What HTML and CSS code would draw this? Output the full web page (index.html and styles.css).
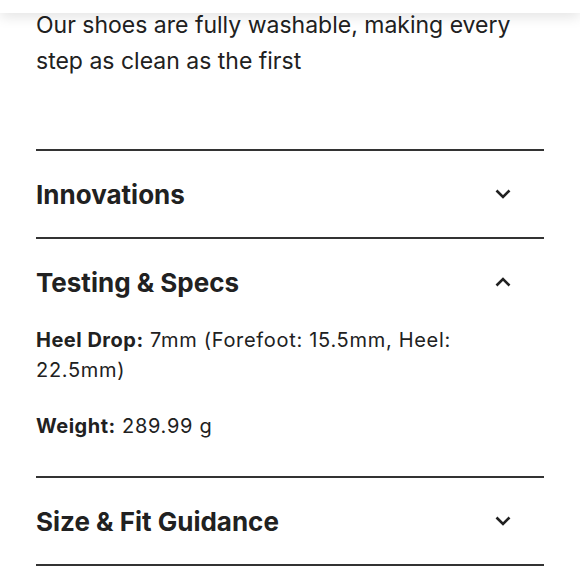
FILE: index.html
```html
<!DOCTYPE html>
<html>
    <head>
        <title>Product details</title>
        <link rel="stylesheet" href="styles.css">
    </head>
    <body>
        <div class="topbar"></div>
        <p class="intro">Our shoes are fully washable, making every step as clean as the first</p>
        <section class="accordion">
            <div class="item">
                <div class="item-head">
                    <h2>Innovations</h2>
                    <svg class="chevron" width="16" height="10" viewBox="0 0 16 10"><path d="M1.5 1.5 L8 8 L14.5 1.5" /></svg>
                </div>
            </div>
            <div class="item open">
                <div class="item-head">
                    <h2>Testing &amp; Specs</h2>
                    <svg class="chevron" width="16" height="10" viewBox="0 0 16 10"><path d="M1.5 8.5 L8 2 L14.5 8.5" /></svg>
                </div>
                <div class="item-body">
                    <p><b>Heel Drop:</b> 7mm (Forefoot: 15.5mm, Heel: 22.5mm)</p>
                    <p><b>Weight:</b> 289.99 g</p>
                </div>
            </div>
            <div class="item">
                <div class="item-head">
                    <h2>Size &amp; Fit Guidance</h2>
                    <svg class="chevron" width="16" height="10" viewBox="0 0 16 10"><path d="M1.5 1.5 L8 8 L14.5 1.5" /></svg>
                </div>
            </div>
        </section>
    </body>
</html>
```
FILE: styles.css
```css
body {
    margin: 0;
    padding: 0 36px;
    background: #fff;
    color: #212121;
    font-family: Inter, "Noto Sans", sans-serif;
}
/* bottom edge of the sticky header */
.topbar {
    position: fixed;
    top: 0;
    left: 0;
    right: 0;
    height: 13px;
    background: #fff;
    box-shadow: 0 3px 14px rgba(0, 0, 0, 0.13);
}
.intro {
    margin: 7px 0 70px;
    font-size: 23px;
    line-height: 36px;
}
.item {
    border-top: 2px solid #333;
}
.item:last-child {
    border-bottom: 2px solid #333;
}
.item-head {
    display: flex;
    align-items: center;
    justify-content: space-between;
    height: 86px;
}
.item-head h2 {
    margin: 0;
    font-size: 26px;
    font-weight: 700;
}
.chevron {
    margin-right: 33px;
}
.chevron path {
    fill: none;
    stroke: #212121;
    stroke-width: 2.6;
}
.item-body {
    padding: 0 40px 35px 0;
}
.item-body p {
    margin: 0 0 26px;
    font-size: 20px;
    line-height: 30px;
    letter-spacing: 0.7px;
}
.item-body p:last-child {
    margin-bottom: 0;
}
.item-body b {
    font-weight: 700;
    letter-spacing: 0.5px;
}
```
